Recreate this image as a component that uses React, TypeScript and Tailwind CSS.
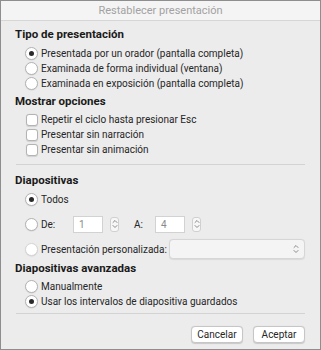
import React from "react";

const font = { fontFamily: "Roboto, 'Noto Sans', sans-serif" };

function Radio({ checked = false, disabled = false }: { checked?: boolean; disabled?: boolean }) {
  return (
    <span
      className={
        "flex h-[13px] w-[13px] shrink-0 items-center justify-center rounded-full border bg-white shadow-[0_0.5px_1px_rgba(0,0,0,0.12)] " +
        (disabled ? "border-[#d6d6d6]" : "border-[#b3b3b3]")
      }
    >
      {checked && <span className="h-[5px] w-[5px] rounded-full bg-[#2a2a2a]" />}
    </span>
  );
}

function Checkbox() {
  return (
    <span className="h-[12px] w-[12px] shrink-0 rounded-[3px] border border-[#b3b3b3] bg-white shadow-[0_0.5px_1px_rgba(0,0,0,0.12)]" />
  );
}

function RadioRow({ label, checked = false }: { label: string; checked?: boolean }) {
  return (
    <div className="flex h-[15px] items-center pl-[10px]">
      <Radio checked={checked} />
      <span className="ml-[3px] whitespace-nowrap text-[#262626]">{label}</span>
    </div>
  );
}

function CheckRow({ label }: { label: string }) {
  return (
    <div className="flex h-[15px] items-center pl-[11px]">
      <Checkbox />
      <span className="ml-[3px] whitespace-nowrap text-[#262626]">{label}</span>
    </div>
  );
}

function Header({ children, className = "" }: { children: React.ReactNode; className?: string }) {
  return <div className={"h-[16px] whitespace-nowrap text-[11.5px] leading-[16px] font-bold text-[#1a1a1a] " + className}>{children}</div>;
}

function UpDown({ className = "" }: { className?: string }) {
  return (
    <svg width="6" height="10" viewBox="0 0 6 10" className={className} fill="none" stroke="#8a8a8a" strokeWidth="1" strokeLinecap="round" strokeLinejoin="round">
      <path d="M1 3.5 L3 1.5 L5 3.5" />
      <path d="M1 6.5 L3 8.5 L5 6.5" />
    </svg>
  );
}

function Stepper() {
  return (
    <span className="flex h-[15px] w-[9px] items-center justify-center rounded-[3px] border border-[#d0d0d0] bg-[#f7f7f7]">
      <UpDown />
    </span>
  );
}

export default function App() {
  return (
    <div className="h-[350px] w-[321px] overflow-hidden bg-[#8e8e8e] p-px text-[10px]" style={font}>
      <div className="flex h-full w-full flex-col bg-[#ececec]">
        <div className="h-[20px] shrink-0 border-b border-[#d6d6d6] bg-[#f4f4f4] text-center text-[11px] leading-[19px] text-[#a2a2a2]">
          Restablecer presentación
        </div>
        <div className="flex flex-col px-[14px]">
          <Header className="mt-[5px]">Tipo de presentación</Header>
          <div className="mt-[4px] flex flex-col">
            <RadioRow label="Presentada por un orador (pantalla completa)" checked />
            <RadioRow label="Examinada de forma individual (ventana)" />
            <RadioRow label="Examinada en exposición (pantalla completa)" />
          </div>
          <Header className="mt-[2px]">Mostrar opciones</Header>
          <div className="mt-[3px] flex flex-col">
            <CheckRow label="Repetir el ciclo hasta presionar Esc" />
            <CheckRow label="Presentar sin narración" />
            <CheckRow label="Presentar sin animación" />
          </div>
          <div className="mx-px mt-[7px] h-px bg-[#d3d3d3]" />
          <Header className="mt-[7px]">Diapositivas</Header>
          <div className="mt-[4px]">
            <RadioRow label="Todos" checked />
          </div>
          <div className="mt-[8px] flex h-[18px] items-center pl-[10px]">
            <Radio />
            <span className="ml-[3px] w-[32px] text-[#262626]">De:</span>
            <span className="flex h-[17px] w-[30px] items-center border border-[#d2d2d2] bg-white pl-[5px] text-[10px] text-[#8a8a8a]">1</span>
            <span className="ml-[7px]">
              <Stepper />
            </span>
            <span className="ml-[15px] w-[21px] text-[#262626]">A:</span>
            <span className="flex h-[17px] w-[30px] items-center border border-[#d2d2d2] bg-white pl-[5px] text-[10px] text-[#8a8a8a]">4</span>
            <span className="ml-[7px]">
              <Stepper />
            </span>
          </div>
          <div className="mt-[6px] flex h-[20px] items-center pl-[10px]">
            <Radio disabled />
            <span className="ml-[3px] whitespace-nowrap text-[#262626]">Presentación personalizada:</span>
            <span className="ml-auto mr-px flex h-[20px] w-[136px] shrink-0 items-center justify-end rounded-[4px] border border-[#d6d6d6] bg-[#f4f4f4] pr-[5px] shadow-[0_0.5px_1px_rgba(0,0,0,0.08)]">
              <UpDown />
            </span>
          </div>
          <Header className="mt-[1px]">Diapositivas avanzadas</Header>
          <div className="mt-[3px] flex flex-col">
            <RadioRow label="Manualmente" />
            <RadioRow label="Usar los intervalos de diapositiva guardados" checked />
          </div>
          <div className="mx-px mt-[4px] h-px bg-[#d3d3d3]" />
          <div className="mt-[12px] flex justify-end gap-[10px] pr-px">
            <button className="flex h-[17px] w-[52px] items-center justify-center rounded-[4px] border border-[#c6c6c6] bg-white text-[#262626] shadow-[0_0.5px_1px_rgba(0,0,0,0.15)]">
              Cancelar
            </button>
            <button className="flex h-[17px] w-[52px] items-center justify-center rounded-[4px] border border-[#c6c6c6] bg-white text-[#262626] shadow-[0_0.5px_1px_rgba(0,0,0,0.15)]">
              Aceptar
            </button>
          </div>
        </div>
      </div>
    </div>
  );
}
